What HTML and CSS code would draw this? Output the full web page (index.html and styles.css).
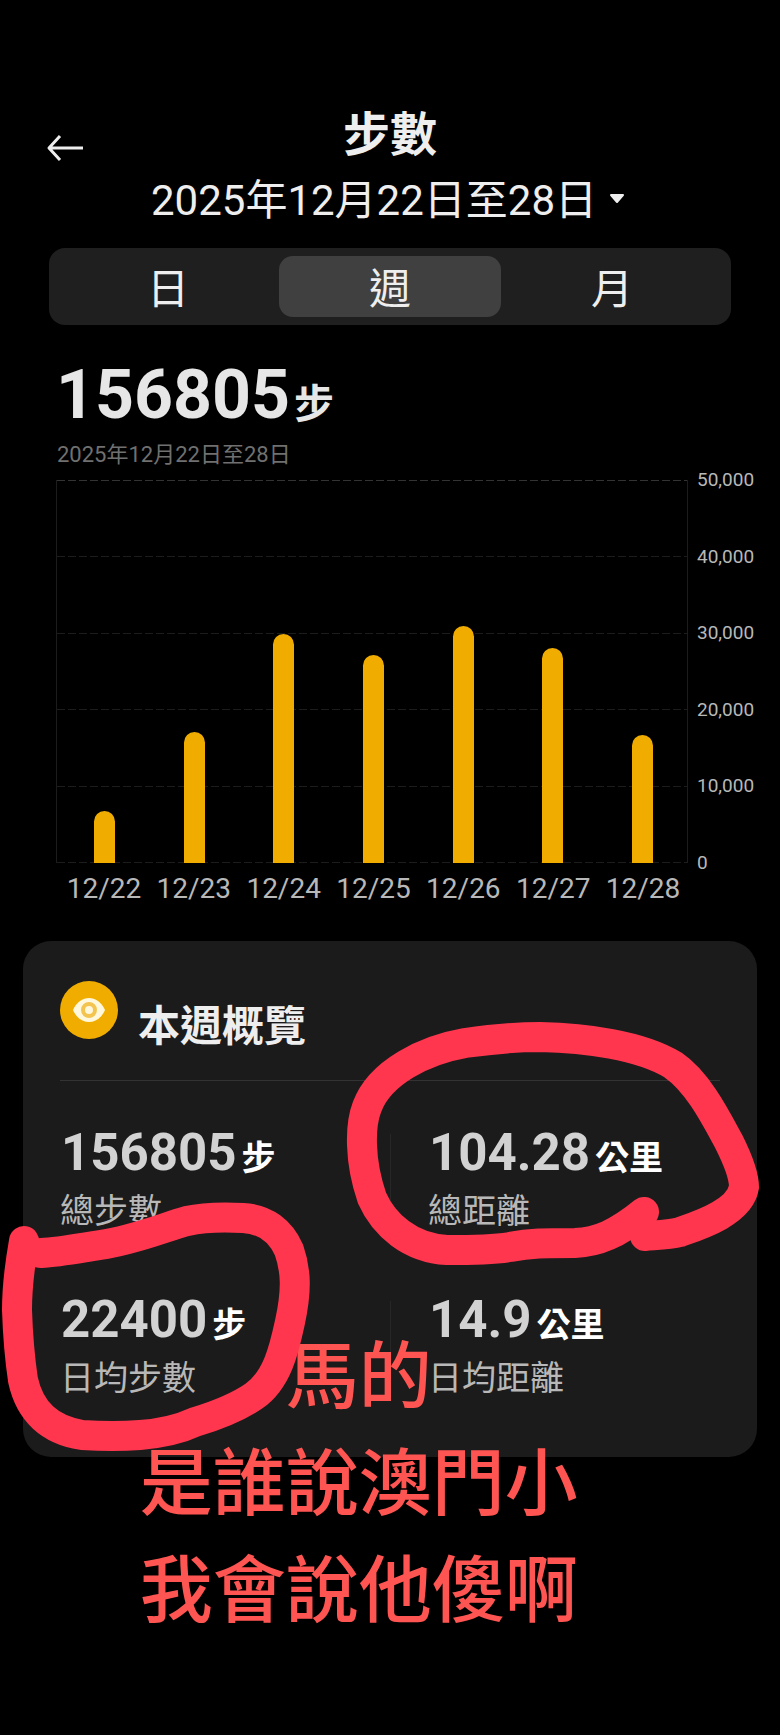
FILE: index.html
```html
<!DOCTYPE html>
<html lang="zh-Hant">
<head>
    <meta charset="UTF-8">
    <meta name="viewport" content="width=device-width, initial-scale=1.0">
    <title>步數</title>
    <link rel="stylesheet" href="styles.css">
</head>
<body>
    <header class="header">
        <button type="button" class="back" aria-label="返回">
            <svg width="38" height="28" viewBox="0 0 38 28" fill="none" stroke="#eee" stroke-width="3">
                <path d="M38 14H4M15 2L4 14L15 26" stroke-linejoin="round"/>
            </svg>
        </button>
        <h1 class="title">步數</h1>
    </header>

    <button type="button" class="date-picker">
        2025年12月22日至28日
        <svg width="16" height="14" viewBox="0 0 16 14"><path d="M2 1H14L8 8Z" fill="#eee" stroke="#eee" stroke-width="2" stroke-linejoin="round"/></svg>
    </button>

    <nav class="tabs">
        <button type="button" class="tab">日</button>
        <button type="button" class="tab active">週</button>
        <button type="button" class="tab">月</button>
    </nav>

    <section class="summary">
        <p class="total">156805<span class="total-unit">步</span></p>
        <p class="period">2025年12月22日至28日</p>
    </section>

    <!-- Weekly bar chart -->
    <section class="chart">
        <div class="plot">
            <div class="grid-lines">
                <i class="line top"></i><i class="line"></i><i class="line"></i><i class="line"></i><i class="line"></i><i class="line"></i>
            </div>
            <div class="bars">
                <div class="bar" style="height: 13.6%"></div>
                <div class="bar" style="height: 34.2%"></div>
                <div class="bar" style="height: 59.8%"></div>
                <div class="bar" style="height: 54.4%"></div>
                <div class="bar" style="height: 61.8%"></div>
                <div class="bar" style="height: 56.2%"></div>
                <div class="bar" style="height: 33.4%"></div>
            </div>
        </div>
        <div class="y-axis">
            <span>50,000</span>
            <span>40,000</span>
            <span>30,000</span>
            <span>20,000</span>
            <span>10,000</span>
            <span>0</span>
        </div>
        <div class="x-axis">
            <span>12/22</span>
            <span>12/23</span>
            <span>12/24</span>
            <span>12/25</span>
            <span>12/26</span>
            <span>12/27</span>
            <span>12/28</span>
        </div>
    </section>

    <!-- Week overview -->
    <section class="card">
        <div class="card-head">
            <svg class="eye" width="58" height="58" viewBox="0 0 58 58">
                <circle cx="29" cy="29" r="29" fill="#f0ad00"/>
                <path d="M13 29C20 13 38 13 45 29C38 45 20 45 13 29Z" fill="#fff8dc"/>
                <circle cx="29" cy="29" r="6" fill="#fff8dc" stroke="#f3c450" stroke-width="4"/>
            </svg>
            <h2 class="card-title">本週概覽</h2>
        </div>
        <div class="stats">
            <div class="stat">
                <p class="value">156805<span class="unit">步</span></p>
                <p class="label">總步數</p>
            </div>
            <div class="stat">
                <p class="value">104.28<span class="unit">公里</span></p>
                <p class="label">總距離</p>
            </div>
            <div class="stat">
                <p class="value">22400<span class="unit">步</span></p>
                <p class="label">日均步數</p>
            </div>
            <div class="stat">
                <p class="value">14.9<span class="unit">公里</span></p>
                <p class="label">日均距離</p>
            </div>
        </div>
    </section>

    <!-- Note and marker circles on top of the page -->
    <p class="note">馬的<br>是誰說澳門小<br>我會說他傻啊</p>
    <svg class="marker" viewBox="0 0 780 1735">
        <path d="M644 1212C617 1234 598 1242 575 1243C545 1243 530 1243 510 1247C490 1250 465 1250 447 1250C410 1248 384 1225 372 1198C359 1160 360 1125 367 1107C380 1072 425 1050 465 1043C500 1038 520 1037 540 1037C585 1038 640 1045 673 1065C698 1082 716 1118 729 1142C738 1160 744 1175 744 1187C740 1212 700 1225 680 1232C668 1235 657 1235 645 1236"/>
        <path d="M24 1241C18 1275 17 1300 17 1310C18 1340 20 1360 23 1380C30 1412 50 1430 82 1435C100 1436 125 1436 140 1435C165 1433 180 1429 195 1422C215 1416 238 1407 254 1396C277 1380 284 1350 290 1322C297 1290 296 1270 289 1250C281 1232 266 1219 243 1218C225 1217 205 1217 187 1221C165 1227 135 1240 100 1245C80 1248 60 1252 41 1253"/>
    </svg>
</body>
</html>
```
FILE: styles.css
```css
* {
    box-sizing: border-box;
}

body {
    margin: 0;
    padding: 105px 23px 280px;
    position: relative;
    background: #000;
    color: #eee;
    font-family: Roboto, "Noto Sans CJK TC", sans-serif;
}

h1, h2, p {
    margin: 0;
}

button {
    padding: 0;
    border: none;
    background: none;
    color: inherit;
    font-family: inherit;
    cursor: pointer;
}

/* Header */
.header {
    display: grid;
    grid-template-columns: 60px 1fr 60px;
    padding: 0 22px;
}

.back {
    height: 28px;
    margin-top: 29px;
}

.back svg {
    display: block;
}

.title {
    font-size: 47px;
    line-height: 60px;
    text-align: center;
}

.date-picker {
    display: flex;
    align-items: center;
    gap: 12px;
    margin: 6px auto 0;
    padding-right: 4px;
    font-size: 42px;
    line-height: 60px;
}

/* Day / week / month */
.tabs {
    display: flex;
    margin: 17px 26px 0;
    padding: 8px;
    border-radius: 16px;
    background: #1f1f1f;
}

.tab {
    flex: 1;
    padding-top: 7px;
    border-radius: 14px;
    font-size: 42px;
    line-height: 54px;
}

.tab.active {
    background: #404040;
}

.summary {
    padding: 33px 33px 0;
}

.total {
    font-size: 68px;
    font-weight: 700;
    line-height: 74px;
    color: #e6e6e6;
}

.total-unit {
    margin-left: 4px;
    font-size: 40px;
}

.period {
    padding-left: 1px;
    font-size: 22px;
    line-height: 26px;
    color: #707070;
}

/* Chart */
.chart {
    display: grid;
    grid-template-columns: 1fr 60px;
    column-gap: 9px;
    margin-top: 12px;
    padding-left: 33px;
}

.plot {
    display: grid;
    height: 383px;
    border: solid #1c1c1c;
    border-width: 0 1px;
}

.grid-lines, .bars {
    grid-area: 1 / 1;
    display: flex;
}

.grid-lines {
    flex-direction: column;
    justify-content: space-between;
}

.line {
    height: 1px;
    background: repeating-linear-gradient(90deg, #1c1c1c 0 8px, transparent 8px 11px);
}

.line.top {
    background: repeating-linear-gradient(90deg, #333 0 8px, transparent 8px 11px);
}

.bars {
    align-items: flex-end;
    justify-content: space-around;
    padding-left: 3px;
}

.bar {
    width: 21px;
    border-radius: 11px 11px 0 0;
    background: #f0ad00;
}

.y-axis {
    display: flex;
    flex-direction: column;
    justify-content: space-between;
    margin: -10px 0;
    font-size: 19px;
    line-height: 20px;
    color: #b8b8b8;
}

.x-axis {
    display: flex;
    padding: 10px 0 0 3px;
    font-size: 28px;
    line-height: 32px;
    color: #b8b8b8;
}

.x-axis span {
    flex: 1;
    text-align: center;
}

/* Overview card */
.card {
    margin-top: 36px;
    padding: 40px 37px 58px;
    border-radius: 28px;
    background: #1b1b1b;
}

.card-head {
    display: flex;
    gap: 20px;
    height: 100px;
    border-bottom: 1px solid #333;
}

.card-title {
    margin-top: 16px;
    font-size: 42px;
    line-height: 60px;
}

.stats {
    display: grid;
    grid-template-columns: 1fr 1fr;
    row-gap: 57px;
    padding-top: 41px;
}

.stat {
    height: 110px;
}

.stat:nth-child(even) {
    padding-left: 38px;
    background: linear-gradient(#272727, #272727) 0 12px / 1px 70px no-repeat;
}

.value {
    padding-left: 1px;
    font-size: 51px;
    font-weight: 700;
    line-height: 62px;
    color: #d2d2d2;
}

.unit {
    margin-left: 5px;
    font-size: 34px;
    color: #fff;
}

.label {
    font-size: 34px;
    line-height: 44px;
    color: #b8b8b8;
}

/* Handwritten layer */
.note {
    position: absolute;
    top: 1324px;
    left: 0;
    width: 92%;
    font-size: 73px;
    font-weight: 500;
    line-height: 107px;
    text-align: center;
    color: #ff5552;
}

.marker {
    position: absolute;
    top: 0;
    left: 0;
    width: 100%;
    fill: none;
    stroke: #ff364e;
    stroke-width: 30px;
    stroke-linecap: round;
    stroke-linejoin: round;
    pointer-events: none;
}
```
